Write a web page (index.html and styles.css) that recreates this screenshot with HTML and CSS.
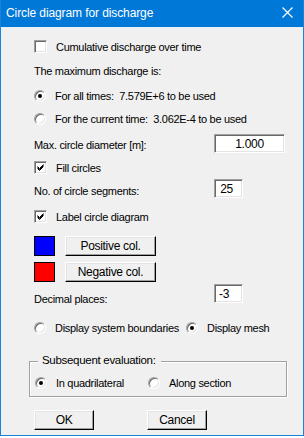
FILE: index.html
```html
<!DOCTYPE html>
<html lang="en">
<head>
    <meta charset="UTF-8">
    <title>Circle diagram for discharge</title>
    <link rel="stylesheet" href="styles.css">
</head>
<body>
    <div class="window">
        <div class="titlebar">
            <span class="title">Circle diagram for discharge</span>
            <svg class="close" width="11" height="11" viewBox="0 0 11 11">
                <path d="M0.5 0.5 L10.5 10.5 M10.5 0.5 L0.5 10.5" stroke="#fff" stroke-width="1.2" fill="none"/>
            </svg>
        </div>
        <div class="content">
            <div class="row row-cumulative">
                <span class="check"></span>
                <span class="label">Cumulative discharge over time</span>
            </div>
            <div class="row row-max">
                <span class="text">The maximum discharge is:</span>
            </div>
            <div class="row row-all">
                <span class="radio checked"></span>
                <span class="label">For all times:&nbsp; 7.579E+6 to be used</span>
            </div>
            <div class="row row-current">
                <span class="radio"></span>
                <span class="label">For the current time:&nbsp; 3.062E-4 to be used</span>
            </div>
            <div class="row row-diameter">
                <span class="text grow">Max. circle diameter [m]:</span>
                <span class="field wide">1.000</span>
            </div>
            <div class="row row-fill">
                <span class="check checked"></span>
                <span class="label">Fill circles</span>
            </div>
            <div class="row row-segments">
                <span class="text grow">No. of circle segments:</span>
                <span class="field narrow">25</span>
            </div>
            <div class="row row-labelcircle">
                <span class="check checked"></span>
                <span class="label">Label circle diagram</span>
            </div>
            <div class="row row-positive">
                <span class="swatch blue"></span>
                <span class="button colour">Positive col.</span>
            </div>
            <div class="row row-negative">
                <span class="swatch red"></span>
                <span class="button colour">Negative col.</span>
            </div>
            <div class="row row-decimal">
                <span class="text grow low">Decimal places:</span>
                <span class="field narrow left">-3</span>
            </div>
            <div class="row row-display">
                <span class="radio"></span>
                <span class="label bounds">Display system boundaries</span>
                <span class="radio checked"></span>
                <span class="label">Display mesh</span>
            </div>
            <div class="group">
                <span class="legend">Subsequent evaluation:</span>
                <div class="row">
                    <span class="radio checked"></span>
                    <span class="label quad">In quadrilateral</span>
                    <span class="radio"></span>
                    <span class="label">Along section</span>
                </div>
            </div>
            <div class="buttons">
                <span class="button">OK</span>
                <span class="button">Cancel</span>
            </div>
        </div>
    </div>
</body>
</html>
```

FILE: styles.css
```css
* {
    margin: 0;
    padding: 0;
    box-sizing: border-box;
}
body {
    background: #ffffff;
    font-family: "Liberation Sans", Arial, sans-serif;
    font-size: 11px;
    letter-spacing: -0.3px;
    color: #000;
}
.window {
    width: 304px;
    height: 436px;
    background: #f0f0f0;
    border: 1px solid #1883d7;
    border-top: none;
}
.titlebar {
    height: 27px;
    background: #0078d7;
    display: flex;
    align-items: center;
    justify-content: space-between;
    padding: 0 10px 2px 5px;
}
.title {
    font-size: 12px;
    letter-spacing: -0.1px;
    color: #fff;
}
.close {
    display: block;
}
.content {
    padding: 0 0 0 33px;
}
.row {
    display: flex;
    align-items: center;
    height: 17px;
}
.row-cumulative { margin-top: 11px; }
.row-max { margin-top: 7px; }
.row-all { margin-top: 8px; }
.row-current { margin-top: 6px; }
.row-diameter { margin-top: 6px; height: 20px; }
.row-fill { margin-top: 6px; }
.row-segments { margin-top: 3px; height: 19px; }
.row-labelcircle { margin-top: 10px; }
.row-positive { margin-top: 11px; height: 20px; }
.row-negative { margin-top: 6px; height: 20px; }
.row-decimal { margin-top: 1px; height: 20px; }
.row-display { margin-top: 16px; }
.text.grow {
    flex: 1;
    padding-top: 4px;
}
.text.low {
    padding-top: 12px;
}
.label {
    margin-left: 9px;
    white-space: nowrap;
}
.label.bounds {
    width: 122px;
    margin-right: 9px;
}
.label.quad {
    width: 92px;
}
.check {
    width: 13px;
    height: 13px;
    background: #fff;
    border: 1px solid;
    border-color: #a0a0a0 #fff #fff #a0a0a0;
    box-shadow: inset 1px 1px #696969, inset -1px -1px #e3e3e3;
    flex: none;
}
.check.checked {
    background: #fff url("data:image/svg+xml,%3Csvg xmlns='http://www.w3.org/2000/svg' width='11' height='11'%3E%3Cpath d='M2.5 4.5 L4.5 6.5 L8.5 2.5 M2.5 5.5 L4.5 7.5 L8.5 3.5 M2.5 6.5 L4.5 8.5 L8.5 4.5' stroke='%23000' stroke-width='1' fill='none'/%3E%3C/svg%3E") no-repeat 0 0;
}
.radio {
    width: 12px;
    height: 12px;
    border-radius: 50%;
    background: #fff;
    border: 1px solid;
    border-color: #a0a0a0 #fff #fff #a0a0a0;
    box-shadow: inset 1px 1px #696969, inset -1px -1px #e3e3e3;
    flex: none;
    display: flex;
    align-items: center;
    justify-content: center;
}
.radio.checked::after {
    content: "";
    width: 4px;
    height: 4px;
    border-radius: 50%;
    background: #000;
}
.field {
    height: 19px;
    background: #fff;
    border: 1px solid;
    border-color: #a0a0a0 #fff #fff #a0a0a0;
    box-shadow: inset 1px 1px #696969, inset -1px -1px #e3e3e3;
    display: flex;
    align-items: center;
    justify-content: center;
    padding-top: 1px;
    font-size: 12px;
}
.field.wide {
    width: 71px;
    margin-right: 18px;
}
.field.narrow {
    width: 29px;
    margin-right: 60px;
    padding-right: 4px;
}
.field.left {
    justify-content: flex-start;
    padding-left: 4px;
}
.swatch {
    width: 21px;
    height: 20px;
    border: 1px solid #000;
}
.swatch.blue { background: #0000ff; }
.swatch.red { background: #ff0000; }
.button {
    width: 60px;
    height: 20px;
    background: #f0f0f0;
    border: 1px solid;
    border-color: #fff #000 #000 #fff;
    box-shadow: inset -1px -1px #a0a0a0, inset 1px 1px #e3e3e3;
    display: flex;
    align-items: center;
    justify-content: center;
    font-size: 12px;
}
.button.colour {
    width: 91px;
    margin-left: 10px;
}
.group {
    position: relative;
    width: 258px;
    height: 36px;
    margin: 25px 0 0 -5px;
    border: 1px solid #a0a0a0;
    box-shadow: inset 1px 1px #fff, 1px 1px #fff;
    padding: 12px 0 0 5px;
}
.legend {
    position: absolute;
    top: -8px;
    left: 8px;
    padding: 0 5px 0 4px;
    background: #f0f0f0;
    font-size: 11.5px;
}
.buttons {
    display: flex;
    gap: 53px;
    margin-top: 13px;
}
```
